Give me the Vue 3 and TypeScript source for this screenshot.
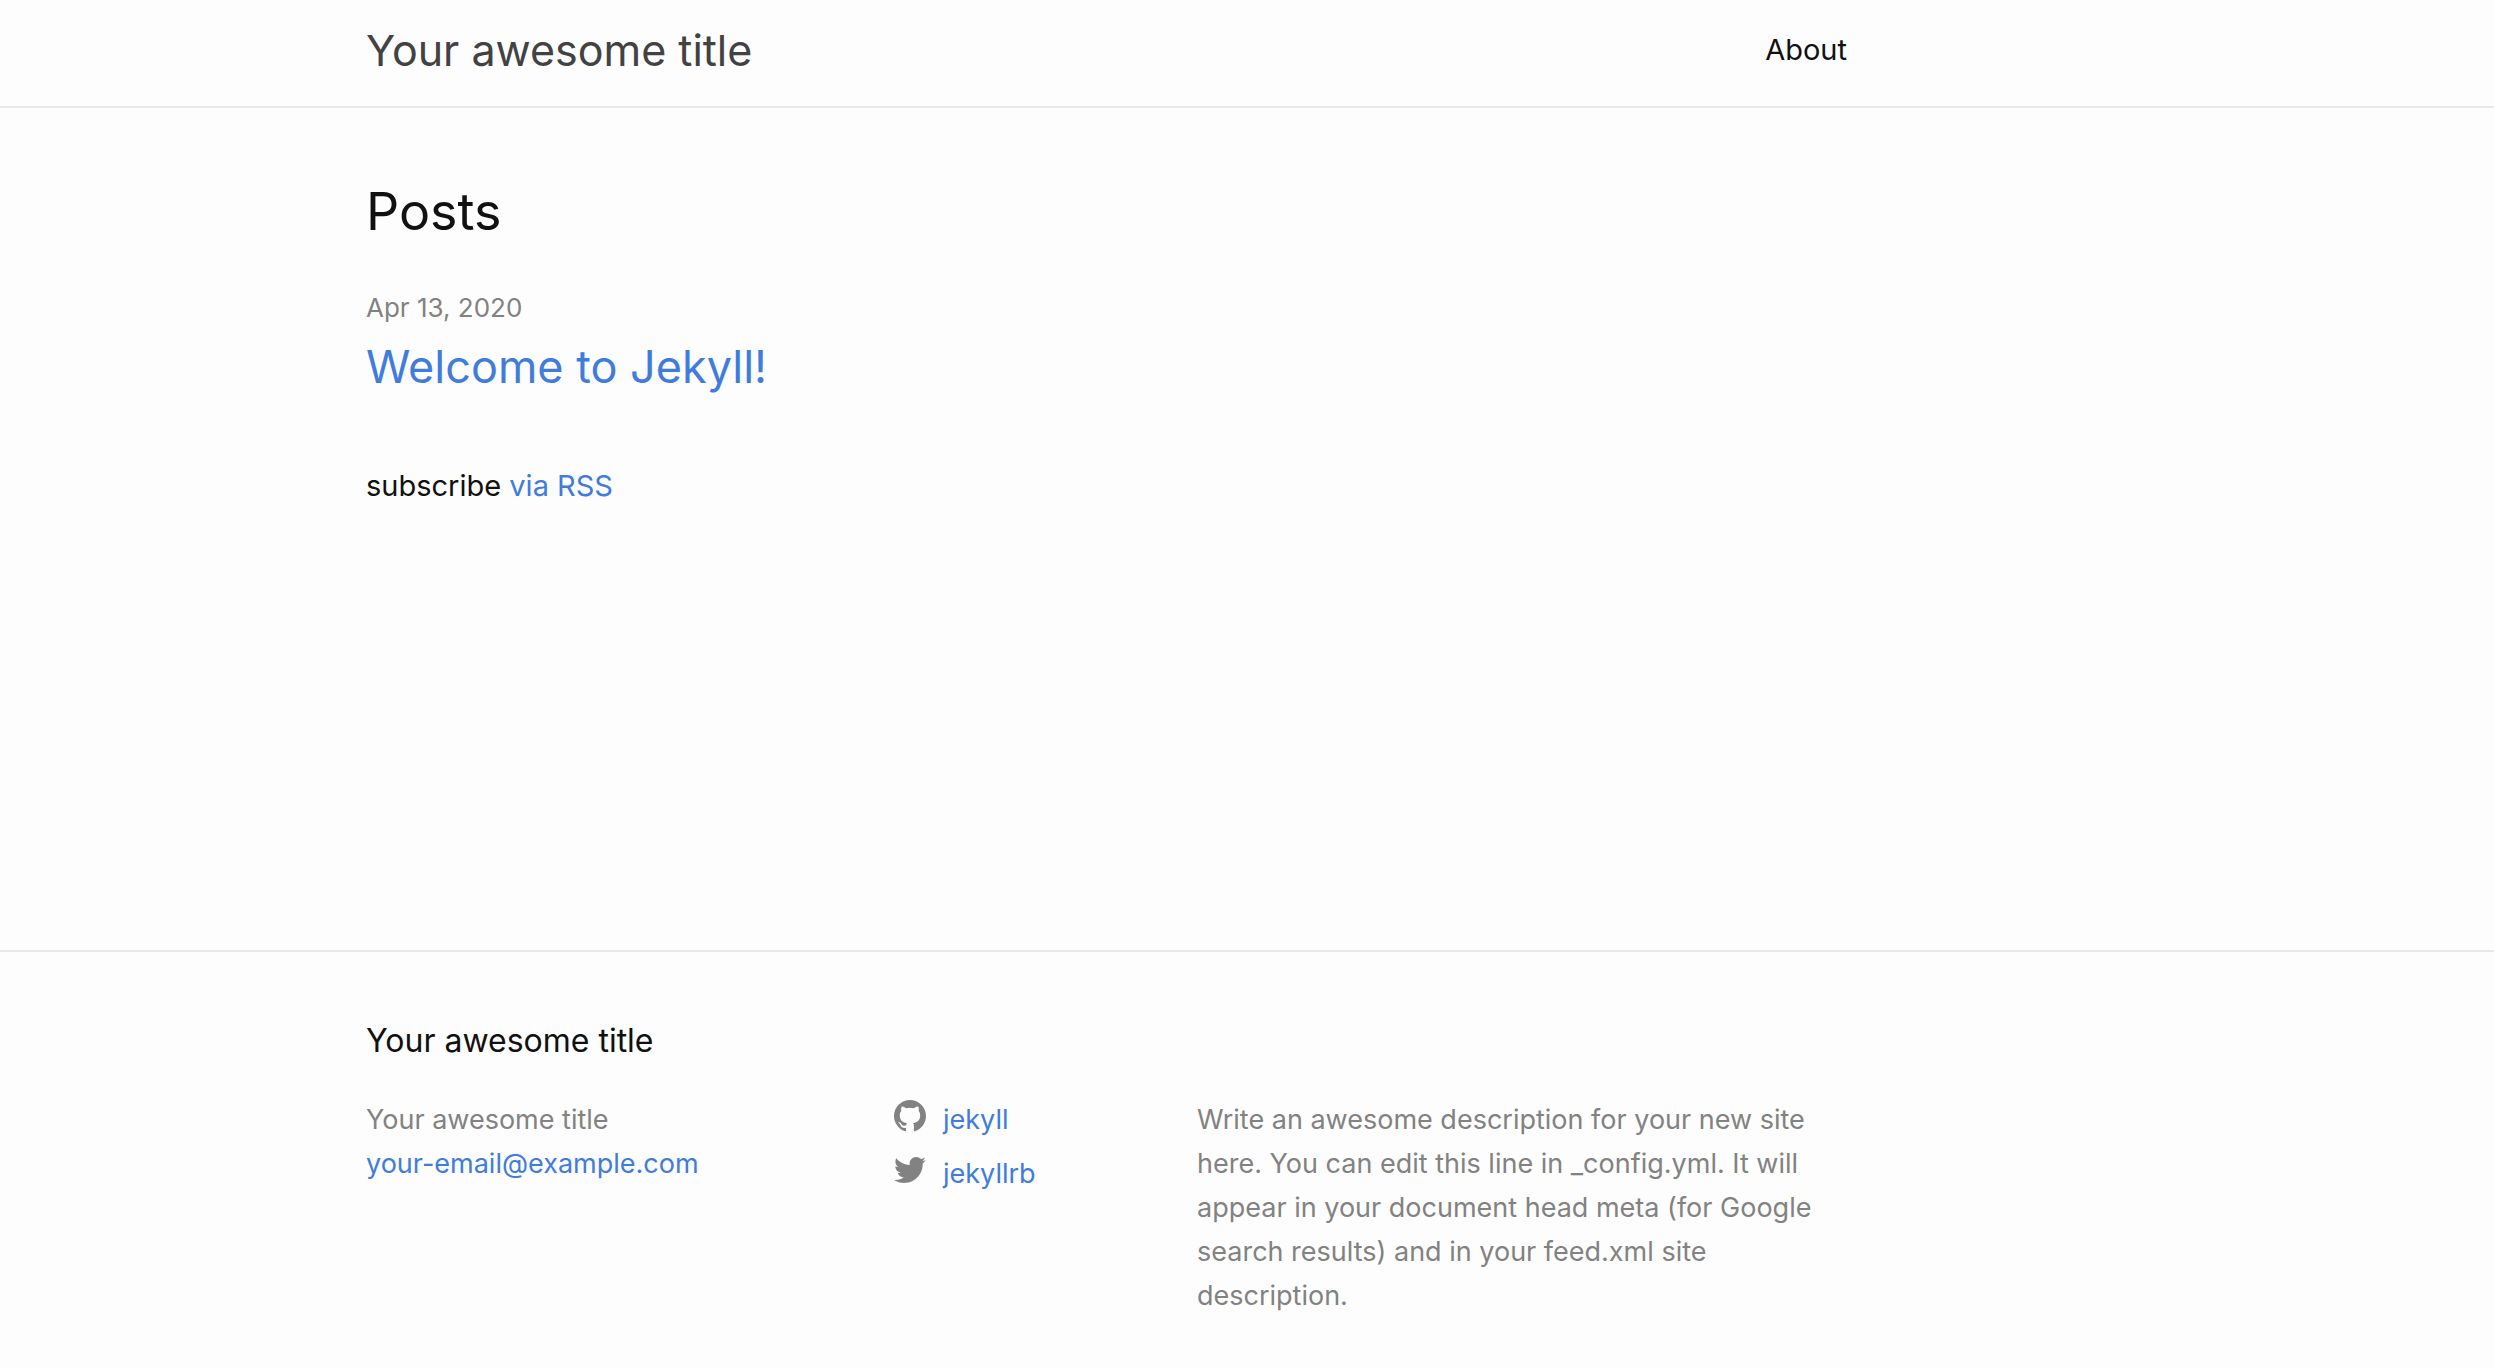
<script setup lang="ts">
interface SocialLink {
  name: string
  href: string
  icon: string
}

const siteTitle = 'Your awesome title'
const email = 'your-email@example.com'
const description =
  'Write an awesome description for your new site here. You can edit this line in _config.yml. It will appear in your document head meta (for Google search results) and in your feed.xml site description.'

const socials: SocialLink[] = [
  {
    name: 'jekyll',
    href: 'https://github.com/jekyll',
    icon: 'M8 0C3.58 0 0 3.582 0 8c0 3.535 2.292 6.533 5.47 7.59.4.075.547-.172.547-.385 0-.19-.007-.693-.01-1.36-2.226.483-2.695-1.073-2.695-1.073-.364-.924-.89-1.17-.89-1.17-.725-.496.056-.486.056-.486.803.056 1.225.824 1.225.824.714 1.223 1.873.87 2.33.665.072-.517.278-.87.507-1.07-1.777-.2-3.644-.888-3.644-3.953 0-.873.31-1.587.823-2.147-.09-.202-.36-1.015.07-2.117 0 0 .67-.215 2.2.82.64-.178 1.32-.266 2-.27.68.004 1.36.092 2 .27 1.52-1.035 2.19-.82 2.19-.82.43 1.102.16 1.915.08 2.117.51.56.82 1.274.82 2.147 0 3.073-1.87 3.75-3.65 3.947.28.24.54.73.54 1.48 0 1.07-.01 1.93-.01 2.19 0 .21.14.46.55.38C13.71 14.53 16 11.53 16 8c0-4.418-3.582-8-8-8',
  },
  {
    name: 'jekyllrb',
    href: 'https://twitter.com/jekyllrb',
    icon: 'M15.969,3.058c-0.586,0.26-1.217,0.436-1.878,0.515c0.675-0.405,1.194-1.045,1.438-1.809c-0.632,0.375-1.332,0.647-2.076,0.793c-0.596-0.636-1.446-1.033-2.387-1.033c-1.806,0-3.27,1.464-3.27,3.27c0,0.256,0.029,0.506,0.085,0.745C5.163,5.404,2.753,4.102,1.14,2.124C0.859,2.607,0.698,3.168,0.698,3.767c0,1.134,0.577,2.135,1.455,2.722C1.616,6.472,1.112,6.325,0.671,6.08c0,0.014,0,0.027,0,0.041c0,1.584,1.127,2.906,2.623,3.206C3.02,9.402,2.731,9.442,2.433,9.442c-0.211,0-0.416-0.021-0.615-0.059c0.416,1.299,1.624,2.245,3.055,2.271c-1.119,0.877-2.529,1.4-4.061,1.4c-0.264,0-0.524-0.015-0.78-0.046c1.447,0.928,3.166,1.469,5.013,1.469c6.015,0,9.304-4.983,9.304-9.304c0-0.142-0.003-0.283-0.009-0.423C14.976,4.29,15.531,3.714,15.969,3.058z',
  },
]
</script>

<template>
  <div class="page">
    <header class="site-header">
      <div class="wrapper header-row">
        <a class="site-title" href="/">{{ siteTitle }}</a>
        <nav>
          <a class="page-link" href="/about/">About</a>
        </nav>
      </div>
    </header>

    <main class="page-content">
      <div class="wrapper">
        <h2 class="posts-heading">Posts</h2>
        <ul class="post-list">
          <li>
            <time class="post-date" datetime="2020-04-13">Apr 13, 2020</time>
            <h3 class="post-title"><a href="/welcome-to-jekyll">Welcome to Jekyll!</a></h3>
          </li>
        </ul>
        <p class="subscribe">subscribe <a href="/feed.xml">via RSS</a></p>
      </div>
    </main>

    <footer class="site-footer">
      <div class="wrapper">
        <h2 class="footer-heading">{{ siteTitle }}</h2>
        <div class="footer-cols">
          <ul>
            <li>{{ siteTitle }}</li>
            <li><a :href="`mailto:${email}`">{{ email }}</a></li>
          </ul>
          <ul class="social">
            <li v-for="item in socials" :key="item.name">
              <a :href="item.href">
                <svg class="icon" viewBox="0 0 16 16" aria-hidden="true"><path :d="item.icon" /></svg>
                <span>{{ item.name }}</span>
              </a>
            </li>
          </ul>
          <p>{{ description }}</p>
        </div>
      </div>
    </footer>
  </div>
</template>

<style>
body {
  margin: 0;
  background: #fdfdfd;
}
</style>

<style scoped>
.page {
  display: flex;
  flex-direction: column;
  min-height: 100vh;
  color: #111;
  background: #fdfdfd;
  font-family: Inter, "Liberation Sans", sans-serif;
  font-size: 29px;
  line-height: 44px;
}
h2,
h3,
p,
ul {
  margin: 0;
  padding: 0;
  font-weight: 400;
  list-style: none;
}
a {
  color: #3f7cde;
  text-decoration: none;
}
a:hover {
  text-decoration: underline;
}
.wrapper {
  box-sizing: border-box;
  max-width: 1847px;
  padding-left: 366px;
}
.site-header {
  padding-bottom: 6px;
  border-bottom: 2px solid #e8e8e8;
}
.header-row {
  display: flex;
  align-items: center;
  justify-content: space-between;
  min-height: 100px;
}
.site-title {
  color: #424242;
  font-size: 43px;
  line-height: 60px;
}
.page-link {
  color: #111;
}
.page-content {
  flex: 1;
  padding: 70px 0 60px;
}
.posts-heading {
  font-size: 52px;
  line-height: 68px;
}
.post-list {
  margin-top: 40px;
}
.post-date {
  display: block;
  color: #828282;
  font-size: 26px;
  line-height: 44px;
}
.post-title {
  font-size: 45px;
  line-height: 74px;
}
.subscribe {
  margin-top: 60px;
}
.site-footer {
  padding: 62px 0 50px;
  border-top: 2px solid #e8e8e8;
}
.footer-heading {
  margin-bottom: 30px;
  font-size: 32px;
  line-height: 54px;
}
.footer-cols {
  display: grid;
  grid-template-columns: 528fr 303fr 650fr;
  color: #828282;
  font-size: 27px;
}
.social {
  display: flex;
  flex-direction: column;
  gap: 10px;
}
.social a {
  display: flex;
  gap: 17px;
}
.icon {
  width: 32px;
  height: 32px;
  margin-top: 2px;
  fill: #828282;
}
</style>
